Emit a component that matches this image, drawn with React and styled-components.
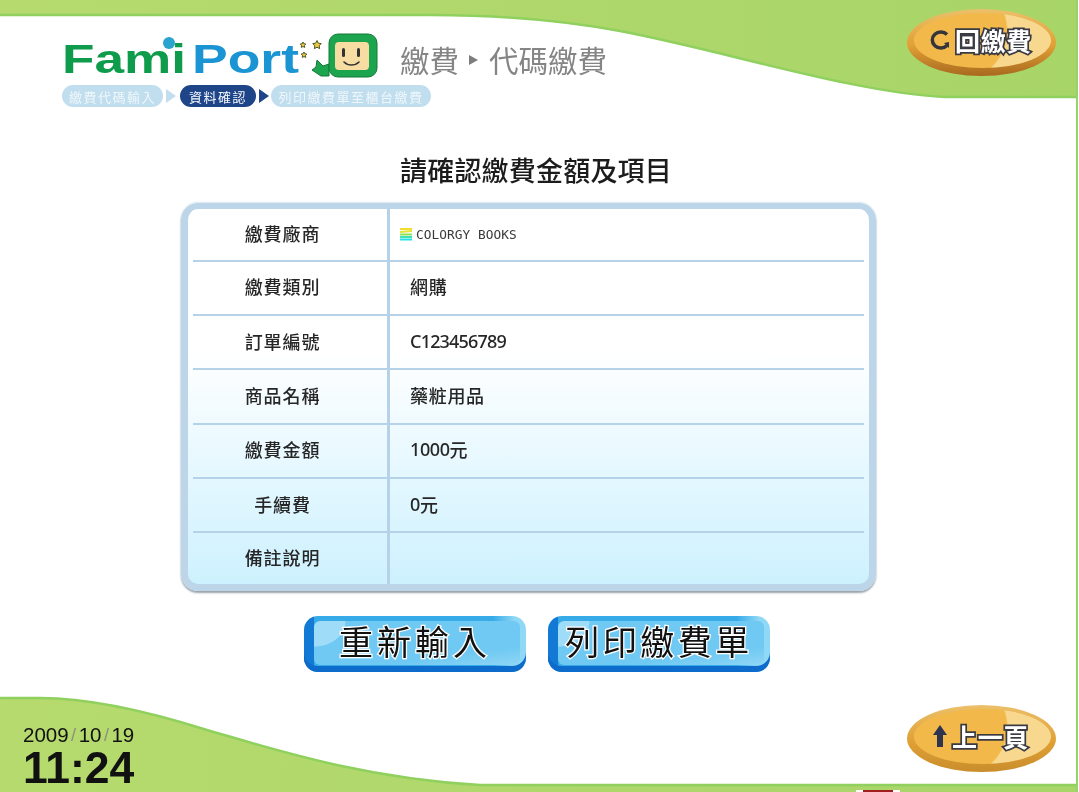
import React from "react";
import styled, { createGlobalStyle } from "styled-components";

const Global = createGlobalStyle`
  html, body { margin: 0; padding: 0; background: #fff; }
  * { box-sizing: border-box; }
`;

const cjk = `"Noto Sans CJK TC", "Noto Sans CJK SC", sans-serif`;

const Page = styled.div`
  position: relative;
  width: 1079px;
  height: 792px;
  overflow: hidden;
  background: #fff;
  display: flex;
  flex-direction: column;
  font-family: ${cjk};
  filter: blur(0.35px);
`;
const Waves = styled.svg`
  position: absolute;
  inset: 0;
  width: 1079px;
  height: 792px;
`;
const Content = styled.div`
  position: relative;
  flex: 1;
  display: flex;
  flex-direction: column;
  padding-top: 33px;
`;
const Header = styled.header`
  display: flex;
  align-items: center;
  padding-left: 62px;
  height: 46px;
`;
const LogoArt = styled.svg`
  width: 316px;
  height: 46px;
  flex: none;
  overflow: visible;
`;
const Crumb = styled.h1`
  margin: 6px 0 0 22px;
  display: flex;
  align-items: center;
  font-size: 29.5px;
  line-height: 46px;
  font-weight: 400;
  color: #858585;
`;
const CrumbArrow = styled.span`
  width: 0;
  height: 0;
  margin: 2px 11px 0 10px;
  border-left: 9px solid #7d7d7d;
  border-top: 5.5px solid transparent;
  border-bottom: 5.5px solid transparent;
`;
const Steps = styled.nav`
  display: flex;
  align-items: center;
  padding-left: 62px;
  margin-top: 6px;
  height: 22px;
`;
const Pill = styled.span`
  width: ${(p) => p.$width}px;
  height: 22px;
  display: flex;
  align-items: center;
  justify-content: center;
  border-radius: 11px;
  font-size: 13px;
  letter-spacing: 1.5px;
  white-space: nowrap;
  color: ${(p) => (p.$active ? "#f4f8fc" : "#eef7fb")};
  background: ${(p) => (p.$active ? "#1f4589" : "#c1deef")};
`;
const StepArrow = styled.span`
  width: 0;
  height: 0;
  margin: 0 ${(p) => (p.$active ? 2 : 4)}px 0 3px;
  border-left: 10px solid ${(p) => (p.$active ? "#1f4589" : "#c1deef")};
  border-top: 7px solid transparent;
  border-bottom: 7px solid transparent;
`;
const Title = styled.h2`
  margin: 43px 0 0;
  height: 40px;
  line-height: 40px;
  text-align: center;
  font-size: 27px;
  font-weight: 500;
  color: #1c1c1c;
  letter-spacing: 0.2px;
  padding-right: 7px;
`;
const Card = styled.section`
  margin: 13px 0 0 181px;
  width: 695px;
  height: 388px;
  border: 7px solid #bdd5e8;
  border-top-width: 6px;
  border-radius: 17px;
  padding: 0 5px;
  background: linear-gradient(#fff 0%, #fff 38%, #cdf1fe 100%);
  box-shadow: 0 2px 2px #9aa3aa, 0 -1px 2px #d9e6ee;
`;
const Row = styled.div`
  display: grid;
  grid-template-columns: 197px 1fr;
  height: ${(p) => (p.$first ? "52.5px" : p.$last ? "51px" : "54.4px")};
  border-bottom: ${(p) => (p.$last ? "none" : "2.5px solid #b5d2e8")};
`;
const Label = styled.div`
  display: flex;
  align-items: center;
  justify-content: center;
  padding: 0 15px 3px 0;
  border-right: 3px solid #b5d2e8;
  font-size: 18px;
  font-weight: 500;
  letter-spacing: 0.9px;
  color: #262626;
`;
const Value = styled.div`
  display: flex;
  align-items: center;
  padding: 0 0 3px 20px;
  font-size: 18px;
  font-weight: 500;
  letter-spacing: 0.7px;
  color: #262626;
`;
const Num = styled.span`
  font-family: "Noto Sans", sans-serif;
  letter-spacing: ${(p) => p.$spacing ?? -0.4}px;
`;
const Vendor = styled.div`
  display: flex;
  align-items: center;
  gap: 3px;
  margin-left: -11px;
  margin-top: 3px;
  font-family: "DejaVu Sans Mono", monospace;
  font-size: 12.8px;
  font-weight: 400;
  letter-spacing: 0.05px;
  white-space: pre;
  color: #3a3a3a;
`;
const VendorMark = styled.svg`
  width: 14px;
  height: 14px;
`;
const Actions = styled.div`
  display: flex;
  gap: 22px;
  margin: 25px 0 0 304px;
`;
const BlueButton = styled.button`
  position: relative;
  width: 222px;
  height: 56px;
  padding: 0 0 9px 0;
  border: none;
  border-radius: 14px;
  overflow: hidden;
  background: linear-gradient(90deg, #1279d4 0 10px, #36abe8 10px 85%, #8fd8f6 95%);
  box-shadow: inset 0 -6px 0 #0d6ccb;
  font-family: ${cjk};
  font-size: 34px;
  font-weight: 400;
  line-height: 50px;
  letter-spacing: ${(p) => p.$spacing}px;
  color: #111;
  -webkit-text-stroke: 2.5px #fff;
  paint-order: stroke fill;
  &::before {
    content: "";
    position: absolute;
    left: 10px;
    right: 6px;
    top: 5px;
    bottom: 7px;
    border-radius: 6px;
    background:
      radial-gradient(ellipse 32px 26px at 0 0, #9edcf7 97%, transparent 100%),
      linear-gradient(172deg, #6fc9f2 0 74%, #8fd6f5 100%);
  }
`;
const ButtonText = styled.span`
  position: relative;
`;
const Footer = styled.footer`
  margin-top: auto;
  padding: 0 0 4px 23px;
  color: #111;
  font-family: "Liberation Sans", Arial, sans-serif;
`;
const DateLine = styled.div`
  display: flex;
  align-items: center;
  font-size: 20.5px;
  line-height: 22px;
`;
const Slash = styled.span`
  color: #8d8f80;
  margin: 0 2.5px;
  font-size: 18px;
`;
const Clock = styled.div`
  font-size: 44.5px;
  font-weight: 700;
  line-height: 40px;
  margin-top: 2px;
`;
const Oval = styled.button`
  position: absolute;
  left: 907px;
  top: ${(p) => p.$top}px;
  width: 149px;
  height: 67px;
  padding: 0 1px 6px 0;
  border: none;
  border-radius: 50%;
  overflow: hidden;
  display: flex;
  align-items: center;
  justify-content: center;
  gap: ${(p) => p.$gap}px;
  background: linear-gradient(#ecc06a 0%, #e0a035 55%, ${(p) => (p.$dark ? "#a9691f" : "#c98d2c")} 100%);
  &::before {
    content: "";
    position: absolute;
    left: 7px;
    right: 5px;
    top: 4px;
    bottom: 8px;
    border-radius: 50%;
    background: radial-gradient(circle 50px at 44px 18px, #f2b94a 97%, #f8d88e 100%);
  }
`;
const OvalIcon = styled.svg`
  position: relative;
  flex: none;
`;
const OvalLabel = styled.span`
  position: relative;
  font-family: ${cjk};
  font-size: 25px;
  font-weight: 700;
  letter-spacing: 0.6px;
  line-height: 30px;
  color: #fff;
  -webkit-text-stroke: 3.5px #3a3a42;
  paint-order: stroke fill;
`;
const Speck = styled.div`
  position: absolute;
  left: 856px;
  bottom: 0;
  width: 44px;
  height: 2px;
  background: linear-gradient(90deg, #fff 0 16%, #a21d1d 16% 84%, #fff 84%);
`;

const rows = [
  ["繳費類別", "網購"],
  ["訂單編號", <Num $spacing={-0.8}>C123456789</Num>],
  ["商品名稱", "藥粧用品"],
  ["繳費金額", <><Num>1000</Num>元</>],
  ["手續費", <><Num>0</Num>元</>],
];

const Star = ({ x, y, r }) => {
  const pts = Array.from({ length: 10 }, (_, i) => {
    const a = (Math.PI * i) / 5 - Math.PI / 2;
    const d = i % 2 ? r * 0.5 : r;
    return `${x + d * Math.cos(a)},${y + d * Math.sin(a)}`;
  }).join(" ");
  return <polygon points={pts} fill="#f0c93a" stroke="#4c5a2a" strokeWidth="1" />;
};

const topEdge = "M0 15H430C500 15 560 20 620 31C730 52 850 92 945 97H1076";
const bottomEdge = "M0 698H40C90 698 150 712 207 730C270 748 360 778 480 785H1076";

export default function App() {
  return (
    <Page>
      <Global />
      <Waves viewBox="0 0 1079 792">
        <defs>
          <linearGradient id="band" x1="0" x2="1" y1="0" y2="0">
            <stop offset="0" stopColor="#b6da6e" />
            <stop offset="1" stopColor="#a8d568" />
          </linearGradient>
        </defs>
        <path d="M1077 0V792" stroke="#9bd268" strokeWidth="2" />
        <path d={`${topEdge}V0H0Z`} fill="url(#band)" />
        <path d={topEdge} fill="none" stroke="#8fd05f" strokeWidth="2.5" />
        <path d={`${bottomEdge}V792H0Z`} fill="url(#band)" />
        <path d={bottomEdge} fill="none" stroke="#8fd05f" strokeWidth="2.5" />
      </Waves>
      <Content>
        <Header>
          <LogoArt viewBox="0 0 316 46">
            <text x="0" y="40" fontFamily="'Liberation Sans', sans-serif" fontWeight="700" fontSize="41" fill="#0e9c4c" textLength="124" lengthAdjust="spacingAndGlyphs">Fami</text>
            <text x="130" y="40" fontFamily="'Liberation Sans', sans-serif" fontWeight="700" fontSize="41" fill="#1a94d2" textLength="107" lengthAdjust="spacingAndGlyphs">Port</text>
            <circle cx="107" cy="10" r="6" fill="#2aa3cf" />
            <Star x={241} y={12} r={3} />
            <Star x={255} y={12} r={4.5} />
            <Star x={242} y={22} r={3} />
            <path d="M255 27l6 6 6-2v12h-8l-9-6 4-3z" fill="#1da44e" stroke="#127a38" />
            <rect x="267" y="1" width="48" height="43" rx="9" fill="#1da44e" stroke="#127a38" strokeWidth="1" />
            <rect x="273" y="9" width="34" height="28" rx="4" fill="#f8dda2" />
            <rect x="280" y="15" width="3" height="9" rx="1.5" fill="#333" />
            <rect x="295" y="15" width="3" height="9" rx="1.5" fill="#333" />
            <path d="M282 29c4 4 11 4 15 0" fill="none" stroke="#333" strokeWidth="1.6" strokeLinecap="round" />
          </LogoArt>
          <Crumb>繳費<CrumbArrow />代碼繳費</Crumb>
        </Header>
        <Steps>
          <Pill $width={101}>繳費代碼輸入</Pill>
          <StepArrow />
          <Pill $active $width={76}>資料確認</Pill>
          <StepArrow $active />
          <Pill $width={160}>列印繳費單至櫃台繳費</Pill>
        </Steps>
        <Title>請確認繳費金額及項目</Title>
        <Card>
          <Row $first>
            <Label>繳費廠商</Label>
            <Value>
              <Vendor>
                <VendorMark viewBox="0 0 14 14">
                  <path d="M1 1h12v2H1z" fill="#f2dc2e" />
                  <path d="M1 4l12-1v2L1 6z" fill="#e4e33a" />
                  <path d="M1 6.5h12v2H1z" fill="#8fe05a" />
                  <path d="M1 9l12 0v2H1z" fill="#3fe3b0" />
                  <path d="M1 11.5h12v2H1z" fill="#25e0ea" />
                </VendorMark>
                COLORGY BOOKS
              </Vendor>
            </Value>
          </Row>
          {rows.map(([k, v]) => (
            <Row key={k}>
              <Label>{k}</Label>
              <Value>{v}</Value>
            </Row>
          ))}
          <Row $last>
            <Label>備註說明</Label>
            <Value />
          </Row>
        </Card>
        <Actions>
          <BlueButton $spacing={4}><ButtonText>重新輸入</ButtonText></BlueButton>
          <BlueButton $spacing={3.5}><ButtonText>列印繳費單</ButtonText></BlueButton>
        </Actions>
        <Footer>
          <DateLine>2009<Slash>/</Slash>10<Slash>/</Slash>19</DateLine>
          <Clock>11:24</Clock>
        </Footer>
      </Content>
      <Oval $top={9} $dark $gap={5}>
        <OvalIcon width="20" height="22" viewBox="0 0 20 22">
          <path d="M17 5.5A8.5 8 0 1 0 17 16.5" fill="none" stroke="#34343c" strokeWidth="3.5" />
          <path d="M14 14l5-1 0 6z" fill="#34343c" />
        </OvalIcon>
        <OvalLabel>回繳費</OvalLabel>
      </Oval>
      <Oval $top={705} $gap={5}>
        <OvalIcon width="14" height="24" viewBox="0 0 14 24">
          <path d="M7 1L14 11H10V23H4V11H0Z" fill="#2e3350" />
        </OvalIcon>
        <OvalLabel>上一頁</OvalLabel>
      </Oval>
      <Speck />
    </Page>
  );
}
